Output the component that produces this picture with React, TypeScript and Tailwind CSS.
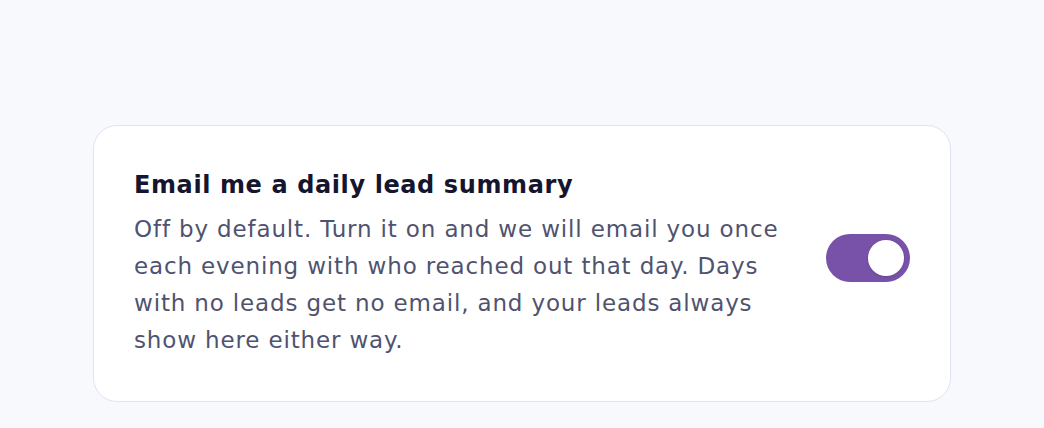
export default function App() {
  return (
    <div
      className="min-h-screen w-full bg-[#f8f9fc] px-[93px] pt-[125px]"
      style={{ fontFamily: '"DejaVu Sans", "Noto Sans", sans-serif' }}
    >
      <div className="flex items-start gap-10 rounded-[24px] border-[1.5px] border-[#e2e3ee] bg-white px-10 pt-[43px] pb-[42px]">
        <div className="flex-1">
          <h2 className="text-[24px] font-bold leading-[32px] tracking-[0.6px] text-[#15152e]">
            Email me a daily lead summary
          </h2>
          <p className="mt-[10px] text-[23px] leading-[37px] tracking-[0.85px] text-[#4f536f]">
            Off by default. Turn it on and we will email you once each evening with who reached out
            that day. Days with no leads get no email, and your leads always show here either way.
          </p>
        </div>
        <button
          type="button"
          role="switch"
          aria-checked="true"
          className="mt-[65px] flex h-12 w-[84px] shrink-0 items-center justify-end rounded-full bg-[#7752a8] p-[6px]"
        >
          <span className="block h-9 w-9 rounded-full bg-white shadow-sm" />
        </button>
      </div>
    </div>
  );
}
